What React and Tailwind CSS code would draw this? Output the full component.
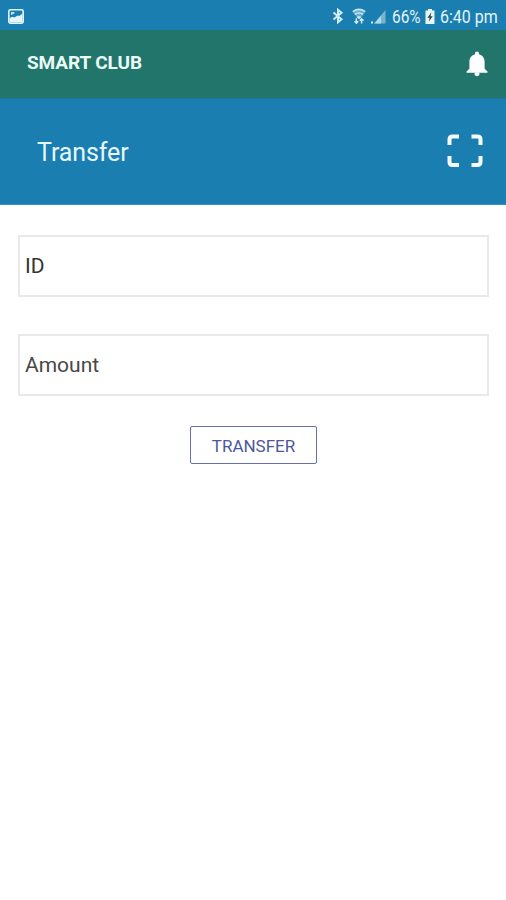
import React, { useState } from 'react';

// Android status bar glyphs
function ImageGlyph() {
  return (
    <svg viewBox="0 0 16 15" className="w-4 h-[15px]">
      <rect x="0.8" y="0.8" width="14.4" height="13.4" rx="1.6" fill="#1b7eb1" stroke="#e4f5f8" strokeWidth="1.6" />
      <path d="M1.5 13.5V9.2L4.4 7.8l1.8 0.8 3.6-2 1.4 0.5 3.3-2.6v9z" fill="#e4f5f8" />
      <path d="M3 3h3.4v1.6L3 6z" fill="#bfe0ec" />
    </svg>
  );
}

function BluetoothGlyph() {
  return (
    <svg viewBox="0 0 12 16" className="w-3 h-4" fill="none" stroke="#d3edf5" strokeWidth="2">
      <path d="M1.5 4.6l8 6.7L6 14.2V1.8l3.5 2.9-8 6.7" />
    </svg>
  );
}

function WifiGlyph() {
  return (
    <svg viewBox="0 0 14 16" className="w-3.5 h-4" fill="none">
      <path d="M0.4 3.6Q7 -1.6 13.6 3.6L8.6 10H5.4z" fill="#69aeca" />
      <path d="M0.8 3.6Q7 -0.8 13.2 3.6" stroke="#c4e4ef" strokeWidth="1.6" />
      <path d="M2.8 6.4Q7 3.4 11.2 6.4" stroke="#c4e4ef" strokeWidth="1.5" />
      <path d="M4.6 9Q7 7.4 9.4 9L7 11.2z" fill="#d3edf5" />
      <path d="M4.4 10.2v5M2.6 13.2l1.8 2 1.8-2M9.6 15.6V11M7.8 12.8l1.8-2 1.8 2" stroke="#d3edf5" strokeWidth="1.5" />
    </svg>
  );
}

function SignalGlyph() {
  return (
    <svg viewBox="0 0 15 15" className="w-[15px] h-[15px]">
      <path d="M3 14.5L14.5 1v13.5z" fill="#76b5d0" />
      <path d="M3.5 14.5L10 6.8v7.7z" fill="#b0d9e8" />
      <rect x="0" y="12.5" width="2" height="2" fill="#d3edf5" />
    </svg>
  );
}

function BatteryGlyph() {
  return (
    <svg viewBox="0 0 10 15" className="w-2.5 h-[15px]">
      <path d="M3 0h4v1.6h2.5V15H0.5V1.6H3z" fill="#e6f4f2" />
      <path d="M6.4 3.2L2.4 8.8h2.3l-1 4 4-5.6H5.4z" fill="#2b4650" />
    </svg>
  );
}

function BellIcon() {
  return (
    <svg viewBox="0 0 22 26" className="w-[22px] h-[26px]" fill="#fff">
      <path d="M11 0.5c1.2 0 2 0.9 2 2v0.8c3.4 0.9 5.6 3.8 5.6 7.4v7.1l2.9 2.8v1.1H0.5v-1.1l2.9-2.8v-7.1c0-3.6 2.2-6.5 5.6-7.4v-0.8c0-1.1 0.8-2 2-2z" />
      <path d="M8.6 21.6h4.8v1.4c0 1.3-1 2.2-2.4 2.2s-2.4-0.9-2.4-2.2z" />
    </svg>
  );
}

function ScanIcon() {
  return (
    <svg viewBox="0 0 36 34" className="w-9 h-[34px]" fill="none" stroke="#f4fcfe" strokeWidth="4">
      <path d="M2.5 11V5.5Q2.5 2.5 5.5 2.5H12" />
      <path d="M24.5 2.5h6Q33.5 2.5 33.5 5.5V11" />
      <path d="M33.5 22v6Q33.5 31 30.5 31h-6" />
      <path d="M12 31H5.5Q2.5 31 2.5 28V22" />
    </svg>
  );
}

function Field({ label, value, onChange, className }) {
  return (
    <input
      aria-label={label}
      placeholder={label}
      value={value}
      onChange={(e) => onChange(e.target.value)}
      className={`block w-full h-[62px] px-[5px] border-2 border-[#e9e9e9] bg-white text-[21px] text-[#333] outline-none ${className}`}
    />
  );
}

export default function App() {
  const [id, setId] = useState('');
  const [amount, setAmount] = useState('');

  return (
    <div className="w-full h-screen overflow-hidden bg-white font-[Roboto,sans-serif]">
      {/* Status bar */}
      <div className="flex items-center h-[30px] pl-2 pr-2 pt-[2px] bg-[#1b7eb1] text-[#e2f4f8]">
        <ImageGlyph />
        <div className="ml-auto flex items-center">
          <BluetoothGlyph />
          <div className="ml-2"><WifiGlyph /></div>
          <div className="ml-[5px]"><SignalGlyph /></div>
          <div className="ml-1.5 w-[30px] pt-px text-[19px] leading-[28px] whitespace-nowrap">
            <span className="inline-block origin-left scale-x-[0.81]">66%</span>
          </div>
          <div className="ml-[3px]"><BatteryGlyph /></div>
          <div className="ml-[5px] w-[58px] pt-px text-[19px] leading-[28px] whitespace-nowrap">
            <span className="inline-block origin-left scale-x-[0.84]">6:40 pm</span>
          </div>
        </div>
      </div>

      {/* App bar */}
      <header className="flex items-center justify-between h-[68px] pl-[27px] pr-[18px] bg-[#21756a]">
        <h1 className="pb-0.5 text-[19px] tracking-[-0.1px] font-bold text-[#eafaf6]">SMART CLUB</h1>
        <button aria-label="Notifications"><BellIcon /></button>
      </header>

      {/* Page title */}
      <div className="flex items-center justify-between h-[107px] pl-[37px] pr-[23px] border-t border-t-[#20739b] border-b border-b-[#3b93bd] bg-[#1b7eb1]">
        <h2 className="pt-[3px] text-[25px] tracking-[-0.1px] text-[#e6f7fb]">Transfer</h2>
        <button aria-label="Scan" className="pb-0.5"><ScanIcon /></button>
      </div>

      {/* Form */}
      <form className="pl-[18px] pr-[17px] pt-[30px]" onSubmit={(e) => e.preventDefault()}>
        <Field label="ID" value={id} onChange={setId} className="placeholder:text-[#333]" />
        <Field label="Amount" value={amount} onChange={setAmount} className="mt-[37px] placeholder:text-[#484848]" />
        <button className="block mx-auto mt-[30px] w-[127px] h-[38px] pt-px rounded-[2px] border-[1.5px] border-[#6570ac] text-[17px] leading-6 text-[#4b57a0]">
          TRANSFER
        </button>
      </form>
    </div>
  );
}
